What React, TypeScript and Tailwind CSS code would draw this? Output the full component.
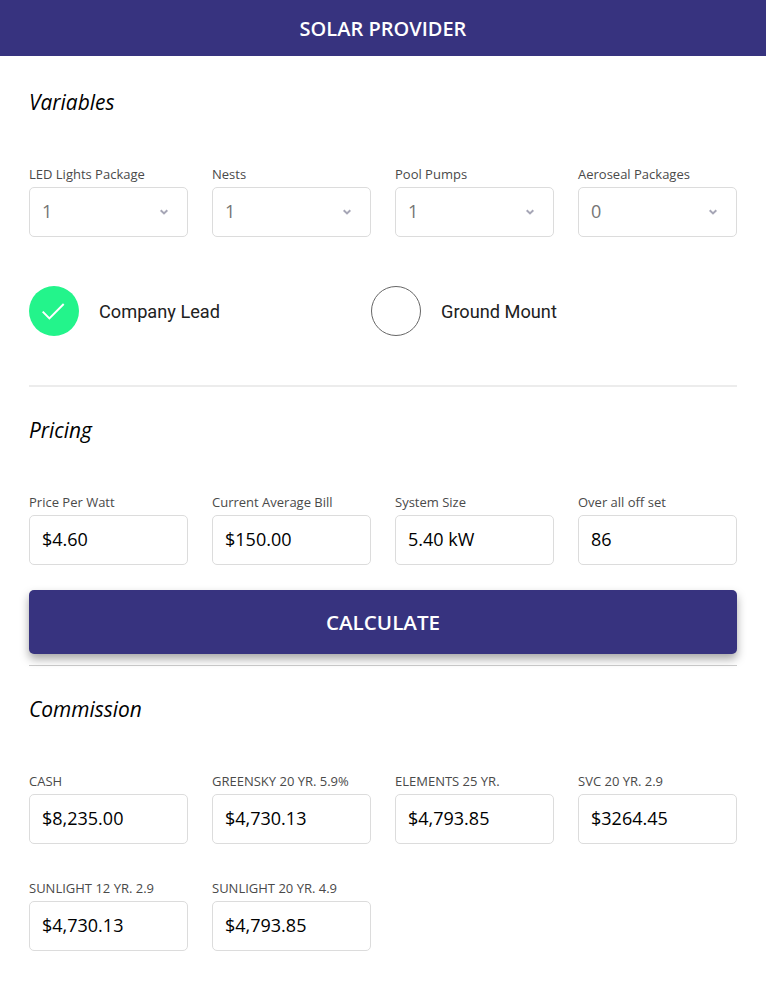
import { useState } from "react";

const variables = [
  { label: "LED Lights Package", value: "1" },
  { label: "Nests", value: "1" },
  { label: "Pool Pumps", value: "1" },
  { label: "Aeroseal Packages", value: "0" },
];

const pricing = [
  { label: "Price Per Watt", value: "$4.60" },
  { label: "Current Average Bill", value: "$150.00" },
  { label: "System Size", value: "5.40 kW" },
  { label: "Over all off set", value: "86" },
];

const commission = [
  { label: "CASH", value: "$8,235.00" },
  { label: "GREENSKY 20 YR. 5.9%", value: "$4,730.13" },
  { label: "ELEMENTS 25 YR.", value: "$4,793.85" },
  { label: "SVC 20 YR. 2.9", value: "$3264.45" },
  { label: "SUNLIGHT 12 YR. 2.9", value: "$4,730.13" },
  { label: "SUNLIGHT 20 YR. 4.9", value: "$4,793.85" },
];

const Label = ({ text }: { text: string }) => (
  <span className="block h-5 whitespace-nowrap text-[13px] leading-5 text-[#4a4a4a]">
    {text}
  </span>
);

const Field = ({ label, value }: { label: string; value: string }) => (
  <label className="block">
    <Label text={label} />
    <input
      type="text"
      defaultValue={value}
      className="mt-[3px] block h-[50px] w-full rounded-[5px] border border-[#dcdcdc] bg-white px-3 pb-0.5 text-lg text-black outline-none"
    />
  </label>
);

const SelectField = ({ label, value }: { label: string; value: string }) => (
  <div>
    <Label text={label} />
    <button
      type="button"
      className="mt-[3px] flex h-[50px] w-full items-center justify-between rounded-[5px] border border-[#dcdcdc] bg-white pl-3 pr-[19px] text-lg text-[#757575]"
    >
      <span className="pb-0.5">{value}</span>
      <svg width="8" height="6" viewBox="0 0 8 6" fill="none" stroke="#a6a6b6" strokeWidth="2">
        <path d="M0.7 1.2 4 4.4 7.3 1.2" />
      </svg>
    </button>
  </div>
);

const Toggle = ({ label, initial }: { label: string; initial: boolean }) => {
  const [checked, setChecked] = useState(initial);

  return (
    <button
      type="button"
      onClick={() => setChecked(!checked)}
      className="flex w-[342px] items-center gap-5 font-[Roboto,sans-serif] text-[18.2px] text-[#212121]"
    >
      {checked ? (
        <span className="flex size-[50px] items-center justify-center rounded-full bg-[#23f48b]">
          <svg width="24" height="18" viewBox="0 0 24 18" fill="none" stroke="#fff" strokeWidth="2">
            <path d="M0.7 9.6 7.4 16.4 21.7 2" />
          </svg>
        </span>
      ) : (
        <span className="size-[50px] rounded-full border border-[#666]" />
      )}
      <span className="pt-0.5">{label}</span>
    </button>
  );
};

const Title = ({ text }: { text: string }) => (
  <h2 className="pt-px text-[20.9px] italic leading-[27px] text-black">{text}</h2>
);

const App = () => {
  return (
    <div className="h-[994px] overflow-hidden bg-white font-['Open_Sans',sans-serif]">
      <header className="flex h-14 items-center justify-center bg-[#37337f]">
        <h1 className="pt-0.5 text-xl font-semibold text-white">SOLAR PROVIDER</h1>
      </header>
      <main className="px-[29px] pt-8">
        <section className="h-[299px] border-b-2 border-[#ececec]">
          <Title text="Variables" />
          <div className="mt-12 grid grid-cols-4 gap-6">
            {variables.map((item) => (
              <SelectField key={item.label} {...item} />
            ))}
          </div>
          <div className="mt-[49px] flex">
            <Toggle label="Company Lead" initial={true} />
            <Toggle label="Ground Mount" initial={false} />
          </div>
        </section>
        <section className="mt-[29px] border-b border-[#ccc] pb-[11px]">
          <Title text="Pricing" />
          <div className="mt-12 grid grid-cols-4 gap-6">
            {pricing.map((item) => (
              <Field key={item.label} {...item} />
            ))}
          </div>
          <button
            type="button"
            className="mt-[25px] h-16 w-full rounded-[5px] bg-[#37337f] pt-px text-[20.6px] font-semibold text-white shadow-[0_5px_10px_rgba(0,0,0,0.35)]"
          >
            CALCULATE
          </button>
        </section>
        <section className="mt-[29px]">
          <Title text="Commission" />
          <div className="mt-12 grid grid-cols-4 gap-x-6 gap-y-[34px]">
            {commission.map((item) => (
              <Field key={item.label} {...item} />
            ))}
          </div>
        </section>
      </main>
    </div>
  );
};

export default App;
